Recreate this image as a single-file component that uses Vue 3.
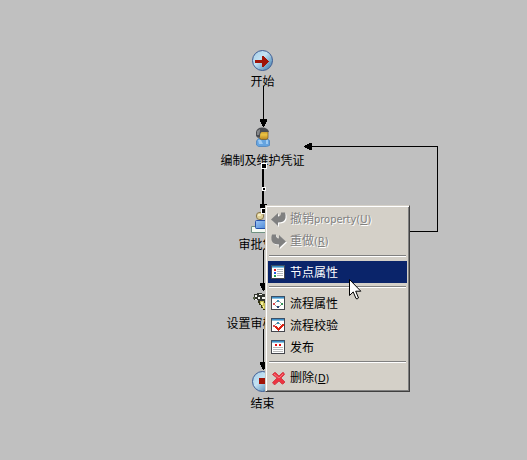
<script setup>
const nodes = [
  { label: '开始', x: 262.5, y: 81 },
  { label: '编制及维护凭证', x: 262.5, y: 159.5 },
  { label: '审批凭证', x: 262.5, y: 244 },
  { label: '设置审核', x: 250.5, y: 323 },
  { label: '结束', x: 262.5, y: 402.5 },
]
const groups = [
  [
    { icon: 'undo', text: '撤销', latin: 'property', key: 'U', disabled: true },
    { icon: 'redo', text: '重做', key: 'R', disabled: true },
  ],
  [{ icon: 'list', text: '节点属性', active: true }],
  [
    { icon: 'flow', text: '流程属性' },
    { icon: 'check', text: '流程校验' },
    { icon: 'publish', text: '发布' },
  ],
  [{ icon: 'delete', text: '删除', key: 'D' }],
]
const undo = 'M0 7.500 L7 1 V4.500 Q10 4.500 10 0.500 H14 Q15 3 14.500 6 Q13.500 10.500 7 10.500 V14 Z'
</script>

<template>
  <main class="canvas">
    <svg class="diagram" width="527" height="460" viewBox="0 0 527 460">
      <defs>
        <linearGradient id="ball" x1="0" y1="0" x2="1" y2="1">
          <stop offset="0" stop-color="#a4cce6" />
          <stop offset=".42" stop-color="#c4e2f3" />
          <stop offset="1" stop-color="#3070a4" />
        </linearGradient>
        <linearGradient id="face" x1="0" y1="0" x2="0" y2="1">
          <stop offset="0" stop-color="#b98a28" />
          <stop offset=".5" stop-color="#ecc444" />
          <stop offset="1" stop-color="#b88420" />
        </linearGradient>
        <linearGradient id="shirt" x1="0" y1="0" x2="1" y2="1">
          <stop offset="0" stop-color="#9cc6f4" />
          <stop offset="1" stop-color="#4c88d8" />
        </linearGradient>
      </defs>

      <g shape-rendering="crispEdges" fill="none" stroke="#000">
        <path d="M263.5 86V120M263.5 250V284M263.5 329V363" />
        <path d="M263 167V206" stroke-width="2" />
        <path d="M409 231.5H437.5V146.5H311" />
      </g>
      <g shape-rendering="crispEdges">
        <path d="M260 119h7v2l-3 6h-1l-3-6z" />
        <path d="M260 204h7v3l-3 6h-1l-3-6z" />
        <path d="M260 283h7v2l-3 6h-1l-3-6z" />
        <path d="M260 362h7v2l-3 6h-1l-3-6z" />
        <path d="M304 146l6-3h2v7h-2l-6-3z" />
      </g>

      <circle cx="262.5" cy="60.5" r="10" fill="url(#ball)" stroke="#3e5c94" />
      <path d="M255 60h7v-4h1l6 5-6 6h-1v-4h-7z" fill="#a01408" shape-rendering="crispEdges" />
      <circle cx="262.5" cy="381.5" r="10" fill="url(#ball)" stroke="#3e5c94" />
      <rect x="259" y="378" width="7" height="6" fill="#a01408" />

      <g>
        <path d="M256.500 141l2-2.500h8.500l2.500 2v5l-3 1h-8l-2-1.500z" fill="#65a4e0" stroke="#4b83bd" stroke-width=".8" />
        <path d="M258 140h3l2 4h-4zM266 140h2v4h-2z" fill="#9fcbf3" />
        <rect x="259.500" y="130" width="8.500" height="9.500" rx="2" fill="url(#face)" stroke="#76581f" stroke-width=".7" />
        <path d="M256 136v-4q1-4.500 6-4.500q6 0 7 4.500h-7q-2 0-2 5l-2 1z" fill="#4a4c50" />
        <path d="M257 131l3-2v2l-1 4h-2z" fill="#858789" />
      </g>

      <g>
        <path d="M251.500 226.500v6h14v-4h-9v-2z" fill="#f4faf2" stroke="#719282" />
        <rect x="255.500" y="220.500" width="11" height="8" rx="1" fill="url(#shirt)" stroke="#2751a8" />
        <circle cx="260" cy="216" r="3.700" fill="#dfd098" stroke="#87764e" />
        <path d="M258 214h3v2h-3z" fill="#f4ecc2" />
      </g>

      <g shape-rendering="crispEdges">
        <path d="M254 294h3v-1h5v1h3v7h-7v-1h-4z" fill="#333630" />
        <path d="M255 295h2v2h-2zM259 294h3v1h-3zM258 297h2v2h-2zM262 297h3v2h-3zM255 299h2v1h-2z" fill="#f4f4ef" />
        <path d="M253 297h2v2h-2z" fill="#596548" />
        <path d="M258 301h7v9h-2v-2h-2v-3h-2v-2h-1z" fill="#343414" />
        <path d="M260 301h4v2h1v6h-2v-2h-1v-3h-2z" fill="#c5bc53" />
        <path d="M261 302h2v3h-2zM263 306h1v2h-1z" fill="#f5ef9e" />
      </g>
    </svg>

    <span v-for="n in nodes" :key="n.label" class="label" :style="{ left: n.x + 'px', top: n.y + 'px' }">{{ n.label }}</span>

    <svg class="handles" width="10" height="56" viewBox="0 0 10 56" shape-rendering="crispEdges">
      <path d="M1 3h6v6H1zM2 27h4v4H2zM1 48h6v6H1z" fill="#fff" />
      <path d="M2 4h4v4H2zM3 28h2v2H3zM2 49h4v4H2z" fill="#000" />
    </svg>

    <nav class="menu">
      <div v-for="(group, i) in groups" :key="i" class="group">
        <div v-for="item in group" :key="item.text" class="item" :class="{ active: item.active, disabled: item.disabled }">
          <svg class="icon" width="16" height="15" viewBox="0 0 16 15">
            <template v-if="item.icon === 'undo'">
              <path :d="undo" fill="#fff" transform="translate(1 1)" />
              <path :d="undo" fill="#808080" />
            </template>
            <template v-else-if="item.icon === 'redo'">
              <path :d="undo" fill="#fff" transform="translate(16 1) scale(-1 1)" />
              <path :d="undo" fill="#808080" transform="translate(15 0) scale(-1 1)" />
            </template>
            <template v-else-if="item.icon === 'delete'">
              <path d="M1.500 3.500l2-2h1L8 5l3.500-3.500h1l1 2L10 7l4 4-2 2h-1L8 10l-4 3.500H3l-1.500-2L6 7z" fill="#ed3441" stroke="#d2434a" />
              <path d="M3 3l5 4 4-4" fill="none" stroke="#fa7880" />
            </template>
            <g v-else shape-rendering="crispEdges">
              <rect width="14" height="14" fill="#45464c" />
              <rect x="1" y="3" width="12" height="10" fill="#fff" />
              <rect x="0" y="0" width="14" height="1" fill="#3a5068" />
              <rect x="1" y="1" width="12" height="1" fill="#3e90c8" />
              <rect x="1" y="2" width="12" height="1" fill="#8abedc" />
              <template v-if="item.icon === 'list'">
                <path d="M3 4h2v2H3z" fill="#e02020" />
                <path d="M3 7h2v2H3z" fill="#2058e0" />
                <path d="M3 10h2v2H3z" fill="#20a050" />
                <path d="M6 4h6v1H6zM6 6h6v1H6zM6 8h6v1H6zM6 10h6v1H6z" fill="#b4b8bc" />
              </template>
              <template v-else-if="item.icon === 'publish'">
                <path d="M4 4h2v2H4zM8 4h2v2H8z" fill="#e80c10" />
                <path d="M2 7h10v1H2zM2 9h10v1H2zM2 11h10v1H2z" fill="#b8b8b8" />
              </template>
              <template v-else>
                <path d="M5 5h1v1H5zM4 6h1v1H4zM8 5h1v1H8zM9 6h1v1H9zM4 9h1v1H4zM5 10h1v1H5zM9 9h1v1H9zM8 10h1v1H8z" fill="#999" />
                <path d="M6 4h2v2H6z" fill="#3e8eb5" />
                <path d="M2 7h2v2H2z" fill="#d84b50" />
                <path d="M10 7h2v2h-2z" fill="#38965a" />
                <path d="M6 10h2v2H6z" fill="#2c4778" />
                <path v-if="item.icon === 'check'" d="M4 8h2v1h1v1h1V9h1V8h1V7h1V6h2v2h-1v1h-1v1h-1v1H9v1H8v1H7v-1H6v-1H5v-1H4z" fill="#dc2414" />
              </template>
            </g>
          </svg>
          <span class="text">{{ item.text }}<span v-if="item.latin || item.key" class="latin">{{ item.latin }}(<span class="key">{{ item.key }}</span>)</span></span>
        </div>
      </div>
    </nav>

    <svg class="cursor" width="13" height="22" viewBox="0 0 13 22">
      <path d="M.5.500V16.500L4.200 12.900L7 19.500Q8 20.500 9.500 19L6.700 12.200H11.800Z" fill="#fff" stroke="#000" />
    </svg>
  </main>
</template>

<style>
body {
  margin: 0;
  background: #c0c0c0;
}
</style>

<style scoped>
.canvas {
  position: relative;
  width: 527px;
  height: 460px;
  overflow: hidden;
  background: #c0c0c0;
  color: #000;
  font: 12px/16px "Noto Sans CJK SC", sans-serif;
}
.diagram {
  display: block;
}
.label {
  position: absolute;
  transform: translate(-50%, -50%);
  white-space: nowrap;
}
.handles {
  position: absolute;
  left: 260px;
  top: 160px;
}
.menu {
  position: absolute;
  left: 265px;
  top: 205px;
  box-sizing: border-box;
  width: 145px;
  height: 187px;
  padding: 1px;
  border: 1px solid;
  border-color: #d4d0c8 #404040 #404040 #d4d0c8;
  background: #d4d0c8;
  box-shadow: inset 1px 1px #fff, inset -1px -1px #808080;
}
.group {
  padding: 0 1px;
}
.group:first-child {
  padding-top: 1px;
}
.group + .group {
  display: flow-root;
}
.group + .group::before {
  content: "";
  display: block;
  height: 1px;
  margin: 3px 1px 5px;
  background: #808080;
  box-shadow: 0 1px #fff;
}
.item {
  display: flex;
  align-items: center;
  box-sizing: border-box;
  height: 22px;
  padding-left: 3px;
}
.icon {
  flex: none;
  margin-top: 1px;
  margin-right: 3px;
}
.text {
  white-space: nowrap;
}
.latin {
  font-family: "DejaVu Sans Condensed", "DejaVu Sans", sans-serif;
  font-stretch: condensed;
  font-size: 11px;
}
.key {
  text-decoration: underline;
}
.active {
  background: #0a246a;
  color: #fff;
}
.disabled {
  color: #808080;
  text-shadow: 1px 1px #fff;
}
.cursor {
  position: absolute;
  left: 349px;
  top: 279px;
}
</style>
